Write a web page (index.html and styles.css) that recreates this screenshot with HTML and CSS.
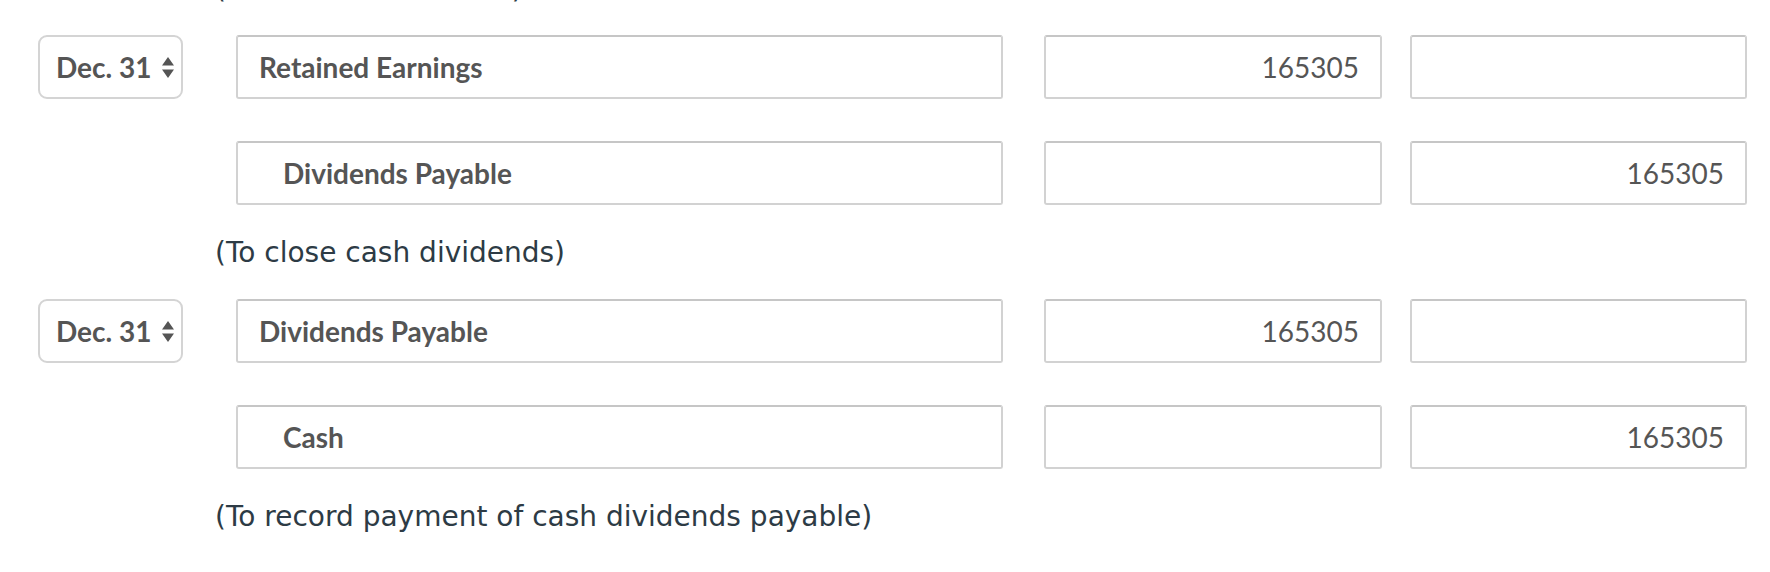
FILE: index.html
```html
<!DOCTYPE html>
<html lang="en">
<head>
    <meta charset="UTF-8">
    <title>Journal Entries</title>
    <link rel="stylesheet" href="styles.css">
</head>
<body>
    <div class="journal">
        <div class="memo">(To declare dividends)</div>

        <div class="row">
            <div class="date-select">Dec. 31
                <svg class="arrows" width="12" height="21" viewBox="0 0 12 21"><path d="M6 0 L12 8.5 L0 8.5 Z M0 12.5 L12 12.5 L6 21 Z" fill="#555"/></svg>
            </div>
            <input class="account" type="text" value="Retained Earnings" readonly>
            <input class="amount debit" type="text" value="165305" readonly>
            <input class="amount credit" type="text" value="" readonly>
        </div>
        <div class="row">
            <div class="date-spacer"></div>
            <input class="account indent" type="text" value="Dividends Payable" readonly>
            <input class="amount debit" type="text" value="" readonly>
            <input class="amount credit" type="text" value="165305" readonly>
        </div>
        <div class="memo">(To close cash dividends)</div>

        <div class="row">
            <div class="date-select">Dec. 31
                <svg class="arrows" width="12" height="21" viewBox="0 0 12 21"><path d="M6 0 L12 8.5 L0 8.5 Z M0 12.5 L12 12.5 L6 21 Z" fill="#555"/></svg>
            </div>
            <input class="account" type="text" value="Dividends Payable" readonly>
            <input class="amount debit" type="text" value="165305" readonly>
            <input class="amount credit" type="text" value="" readonly>
        </div>
        <div class="row">
            <div class="date-spacer"></div>
            <input class="account indent" type="text" value="Cash" readonly>
            <input class="amount debit" type="text" value="" readonly>
            <input class="amount credit" type="text" value="165305" readonly>
        </div>
        <div class="memo">(To record payment of cash dividends payable)</div>
    </div>
</body>
</html>
```

FILE: styles.css
```css
body {
    margin: 0;
    background: white;
    font-family: Lato, "Open Sans", sans-serif;
    overflow: hidden;
}
.journal {
    margin-top: -59px;
    padding-left: 38px;
}
.memo {
    height: 94px;
    display: flex;
    align-items: center;
    padding-left: 177px;
    font-family: "DejaVu Sans", sans-serif;
    font-size: 28px;
    color: #2d3b45;
}
.row {
    display: flex;
    height: 64px;
}
.row + .row {
    margin-top: 42px;
}
.date-select, .date-spacer {
    width: 145px;
    margin-right: 53px;
    flex-shrink: 0;
}
.date-select {
    box-sizing: border-box;
    border: 2px solid #d4d4d4;
    border-radius: 9px;
    display: flex;
    align-items: center;
    padding-left: 16px;
    font-weight: bold;
    font-size: 28px;
    color: #555;
}
.arrows {
    margin-left: 10px;
}
input {
    box-sizing: border-box;
    height: 64px;
    border: 2px solid #d2d2d2;
    border-top-color: #c6c6c6;
    border-radius: 3px;
    font-family: Lato, "Open Sans", sans-serif;
    color: #555;
    padding: 0 21px;
    background: white;
    outline: none;
}
.account {
    width: 767px;
    margin-right: 41px;
    font-weight: bold;
    font-size: 28px;
}
.account.indent {
    padding-left: 45px;
}
.amount {
    font-size: 28px;
    text-align: right;
}
.debit {
    width: 338px;
    margin-right: 28px;
}
.credit {
    width: 337px;
}
```
